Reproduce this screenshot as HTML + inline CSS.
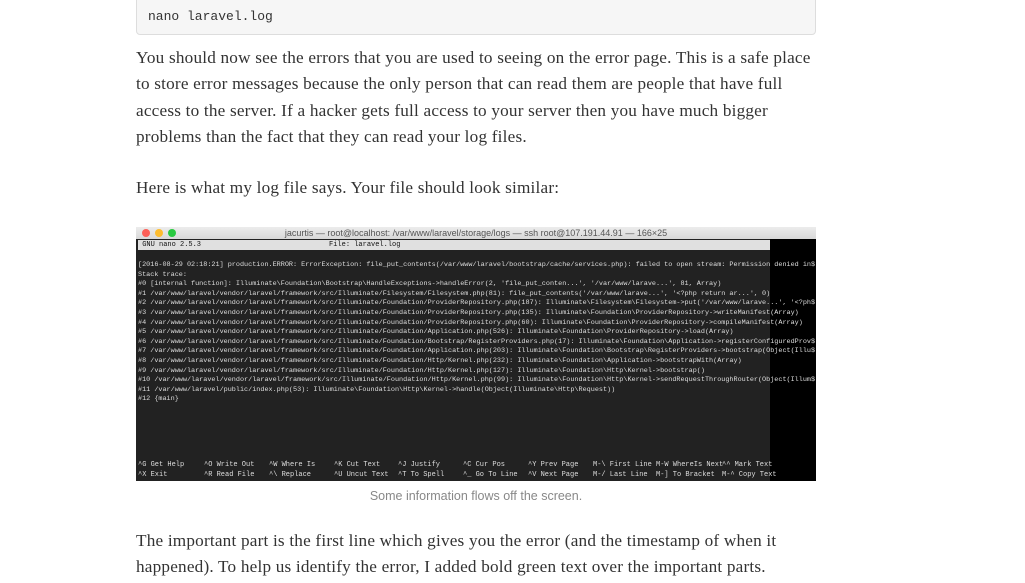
<!DOCTYPE html>
<html><head><meta charset="utf-8"><style>
body{margin:0;width:1025px;height:583px;overflow:hidden;background:#fff;position:relative;font-family:"Liberation Serif",serif;color:#333}
.code{position:absolute;left:136px;top:-6px;width:678px;height:39px;background:#f6f6f6;border:1px solid #ddd;border-radius:4px}
.code span{position:absolute;left:11px;top:14px;font:13px "Liberation Mono",monospace;color:#333}
p{position:absolute;left:136px;margin:0;font-size:17.2px;letter-spacing:0.2px;line-height:26.3px;width:680px}
.term{position:absolute;left:136px;top:227px;width:680px;height:254px;background:#222;overflow:hidden}
.tb{height:12px;background:linear-gradient(#ececec,#d8d8d8);font:9px "Liberation Sans",sans-serif;color:#555;text-align:center;line-height:12px;position:relative}
.dot{position:absolute;top:2px;width:8px;height:8px;border-radius:50%}
.nb{position:absolute;left:2px;top:13px;width:632px;height:10px;background:#e0e0e0;font:7px "Liberation Mono",monospace;color:#111;line-height:10px}
.body{position:absolute;left:2px;top:34px;font:6.8px/9.6px "Liberation Mono",monospace;color:#ddd;white-space:pre}
.right{position:absolute;right:0;top:12px;width:46px;bottom:0;background:#000}
.foot{position:absolute;left:2px;top:233px;width:632px;height:20px;font:7px/10px "Liberation Mono",monospace;color:#ddd}
.foot span{position:absolute;top:0;white-space:pre}
.cap{position:absolute;left:136px;width:680px;top:489px;text-align:center;font:12.5px "Liberation Sans",sans-serif;color:#888}
</style></head><body>
<div class="code"><span>nano laravel.log</span></div>
<p style="top:45px">You should now see the errors that you are used to seeing on the error page. This is a safe place to store error messages because the only person that can read them are people that have full access to the server. If a hacker gets full access to your server then you have much bigger problems than the fact that they can read your log files.</p>
<p style="top:175px">Here is what my log file says. Your file should look similar:</p>
<div class="term">
<div class="tb"><span class="dot" style="left:6px;background:#fc5f57"></span><span class="dot" style="left:19px;background:#fdbc2e"></span><span class="dot" style="left:32px;background:#29c940"></span>jacurtis — root@localhost: /var/www/laravel/storage/logs — ssh root@107.191.44.91 — 166×25</div>
<div class="right"></div>
<div class="nb">&nbsp;GNU nano 2.5.3<span style="margin-left:128px">File: laravel.log</span></div>
<div class="body">[2016-08-29 02:18:21] production.ERROR: ErrorException: file_put_contents(/var/www/laravel/bootstrap/cache/services.php): failed to open stream: Permission denied in$
Stack trace:
#0 [internal function]: Illuminate\Foundation\Bootstrap\HandleExceptions->handleError(2, 'file_put_conten...', '/var/www/larave...', 81, Array)
#1 /var/www/laravel/vendor/laravel/framework/src/Illuminate/Filesystem/Filesystem.php(81): file_put_contents('/var/www/larave...', '&lt;?php return ar...', 0)
#2 /var/www/laravel/vendor/laravel/framework/src/Illuminate/Foundation/ProviderRepository.php(187): Illuminate\Filesystem\Filesystem->put('/var/www/larave...', '&lt;?ph$
#3 /var/www/laravel/vendor/laravel/framework/src/Illuminate/Foundation/ProviderRepository.php(135): Illuminate\Foundation\ProviderRepository->writeManifest(Array)
#4 /var/www/laravel/vendor/laravel/framework/src/Illuminate/Foundation/ProviderRepository.php(60): Illuminate\Foundation\ProviderRepository->compileManifest(Array)
#5 /var/www/laravel/vendor/laravel/framework/src/Illuminate/Foundation/Application.php(526): Illuminate\Foundation\ProviderRepository->load(Array)
#6 /var/www/laravel/vendor/laravel/framework/src/Illuminate/Foundation/Bootstrap/RegisterProviders.php(17): Illuminate\Foundation\Application->registerConfiguredProv$
#7 /var/www/laravel/vendor/laravel/framework/src/Illuminate/Foundation/Application.php(203): Illuminate\Foundation\Bootstrap\RegisterProviders->bootstrap(Object(Illu$
#8 /var/www/laravel/vendor/laravel/framework/src/Illuminate/Foundation/Http/Kernel.php(232): Illuminate\Foundation\Application->bootstrapWith(Array)
#9 /var/www/laravel/vendor/laravel/framework/src/Illuminate/Foundation/Http/Kernel.php(127): Illuminate\Foundation\Http\Kernel->bootstrap()
#10 /var/www/laravel/vendor/laravel/framework/src/Illuminate/Foundation/Http/Kernel.php(99): Illuminate\Foundation\Http\Kernel->sendRequestThroughRouter(Object(Illum$
#11 /var/www/laravel/public/index.php(53): Illuminate\Foundation\Http\Kernel->handle(Object(Illuminate\Http\Request))
#12 {main}</div>
<div class="foot"><span style="left:0">^G Get Help
^X Exit</span><span style="left:66px">^O Write Out
^R Read File</span><span style="left:131px">^W Where Is
^\ Replace</span><span style="left:196px">^K Cut Text
^U Uncut Text</span><span style="left:260px">^J Justify
^T To Spell</span><span style="left:325px">^C Cur Pos
^_ Go To Line</span><span style="left:390px">^Y Prev Page
^V Next Page</span><span style="left:455px">M-\ First Line
M-/ Last Line</span><span style="left:518px">M-W WhereIs Next
M-] To Bracket</span><span style="left:584px">^^ Mark Text
M-^ Copy Text</span></div>
</div>
<div class="cap">Some information flows off the screen.</div>
<p style="top:528px">The important part is the first line which gives you the error (and the timestamp of when it happened). To help us identify the error, I added bold green text over the important parts.</p>
</body></html>
